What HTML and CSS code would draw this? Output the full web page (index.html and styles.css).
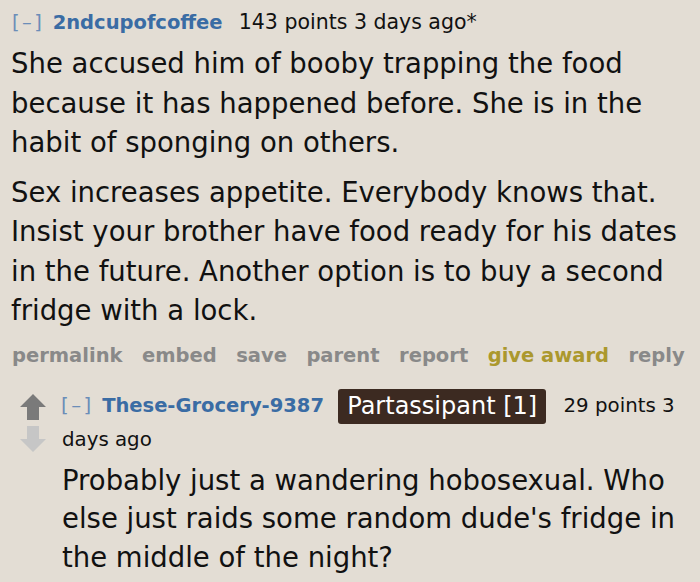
FILE: index.html
```html
<!DOCTYPE html>
<html lang="en">
  <head>
    <meta charset="UTF-8" />
    <title>Comments</title>
    <link rel="stylesheet" href="styles.css">
  </head>
  <body>
    <div class="comment">
      <p class="tagline">
        <a class="expand">[–]</a>
        <a class="author">2ndcupofcoffee</a>
        <span class="score">143 points 3 days ago*</span>
      </p>
      <div class="md">
        <p>She accused him of booby trapping the food because it has happened before. She is in the habit of sponging on others.</p>
        <p>Sex increases appetite. Everybody knows that. Insist your brother have food ready for his dates in the future. Another option is to buy a second fridge with a lock.</p>
      </div>
      <ul class="buttons">
        <li>permalink</li>
        <li>embed</li>
        <li>save</li>
        <li>parent</li>
        <li>report</li>
        <li class="gold">give award</li>
        <li>reply</li>
      </ul>

      <div class="child">
        <div class="midcol">
          <svg class="arrow" width="26" height="26" viewBox="0 0 26 26">
            <path d="M13 0 L26 13 L19 13 L19 26 L7 26 L7 13 L0 13 Z" fill="#7a7a7a" />
          </svg>
          <svg class="arrow" width="26" height="26" viewBox="0 0 26 26">
            <path d="M7 0 L19 0 L19 13 L26 13 L13 26 L0 13 L7 13 Z" fill="#c6c6c6" />
          </svg>
        </div>
        <div class="entry">
          <p class="tagline child-tagline">
            <a class="expand">[–]</a>
            <a class="author">These-Grocery-9387</a>
            <span class="flair">Partassipant [1]</span>
            <span class="score">29 points 3</span>
            <span class="score">days ago</span>
          </p>
          <div class="md">
            <p>Probably just a wandering hobosexual. Who else just raids some random dude's fridge in the middle of the night?</p>
          </div>
        </div>
      </div>
    </div>
  </body>
</html>
```

FILE: styles.css
```css
body {
  margin: 0;
  background: #e3ddd4;
  font-family: "DejaVu Sans", Verdana, sans-serif;
  color: #111;
  overflow: hidden;
}
a {
  text-decoration: none;
}
.comment {
  padding: 7px 4px 0 11px;
}
.tagline {
  margin: 0;
  font-size: 19.5px;
  line-height: 30px;
}
.expand {
  color: #6b8db8;
  letter-spacing: 2.5px;
  margin-left: 1px;
  margin-right: 2px;
}
.author {
  color: #3a6ca4;
  font-weight: bold;
  margin-right: 10px;
}
.score {
  font-size: 20.5px;
}
.md {
  margin-top: 6px;
}
.md p {
  margin: 0 0 10px;
  font-size: 27.5px;
  line-height: 39.5px;
}
.buttons {
  list-style: none;
  margin: 0;
  padding: 0;
  display: flex;
  gap: 19.5px;
  font-weight: bold;
  font-size: 19.5px;
  color: #898989;
  line-height: 30px;
}
.buttons li:first-child {
  margin-left: 1px;
}
.buttons .gold {
  color: #ab982d;
}
.child {
  display: flex;
  margin-top: 18px;
}
.midcol {
  display: flex;
  flex-direction: column;
  gap: 6px;
  padding: 5px 0 0 9px;
  width: 42px;
  flex-shrink: 0;
}
.entry {
  flex: 1;
}
.child-tagline {
  font-size: 19.8px;
  line-height: 33px;
}
.child-tagline .expand {
  margin-left: -1px;
}
.child-tagline .author {
  font-size: 19.5px;
  margin-right: 8px;
}
.child-tagline .score {
  font-size: 19.8px;
}
.flair {
  display: inline-block;
  background: #3c2a21;
  color: #fff;
  font-size: 24px;
  line-height: 35px;
  margin: -1px 11px -1px 0;
  padding: 0 9px;
  border-radius: 3px;
  vertical-align: middle;
}
.entry .md {
  margin-top: 5px;
}
.entry .md p {
  line-height: 38.5px;
}
```
